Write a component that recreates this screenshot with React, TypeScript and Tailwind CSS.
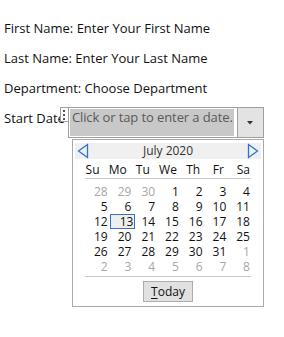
const font = { fontFamily: '"Open Sans", "Noto Sans", sans-serif' };

type Day = { n: number; muted?: boolean; today?: boolean };

const weeks: Day[][] = [
  [{ n: 28, muted: true }, { n: 29, muted: true }, { n: 30, muted: true }, { n: 1 }, { n: 2 }, { n: 3 }, { n: 4 }],
  [{ n: 5 }, { n: 6 }, { n: 7 }, { n: 8 }, { n: 9 }, { n: 10 }, { n: 11 }],
  [{ n: 12 }, { n: 13, today: true }, { n: 14 }, { n: 15 }, { n: 16 }, { n: 17 }, { n: 18 }],
  [{ n: 19 }, { n: 20 }, { n: 21 }, { n: 22 }, { n: 23 }, { n: 24 }, { n: 25 }],
  [{ n: 26 }, { n: 27 }, { n: 28 }, { n: 29 }, { n: 30 }, { n: 31 }, { n: 1, muted: true }],
  [{ n: 2, muted: true }, { n: 3, muted: true }, { n: 4, muted: true }, { n: 5, muted: true }, { n: 6, muted: true }, { n: 7, muted: true }, { n: 8, muted: true }],
];

const dayNames = ["Su", "Mo", "Tu", "We", "Th", "Fr", "Sa"];

function Arrow({ dir }: { dir: "left" | "right" }) {
  return (
    <svg width="12" height="16" viewBox="0 0 12 16" className="shrink-0">
      {dir === "left" ? (
        <path d="M10.5 1.5 L1.5 8 L10.5 14.5 Z" fill="none" stroke="#2f74c9" strokeWidth="1.3" />
      ) : (
        <path d="M1.5 1.5 L10.5 8 L1.5 14.5 Z" fill="none" stroke="#2f74c9" strokeWidth="1.3" />
      )}
    </svg>
  );
}

function DatePopup() {
  return (
    <div className="absolute left-[68px] top-[31px] w-[192px] border border-[#a9a9a9] bg-white pb-[4px]">
      <div className="mx-[2px] mt-[3px] flex h-[16px] items-center justify-between bg-[#f0f0f0] px-[2px]">
        <Arrow dir="left" />
        <span className="text-[12px] text-[#333]">July 2020</span>
        <Arrow dir="right" />
      </div>
      <div className="mx-[7px] mt-[3px] grid h-[15px] grid-cols-7 items-center text-[12px] text-[#111]">
        {dayNames.map((d) => (
          <span key={d} className="text-center leading-[15px]">
            {d}
          </span>
        ))}
      </div>
      <div className="mx-[12px] mt-[1px] h-px bg-[#c8c8c8]" />
      <div className="mx-[12px] mt-[5px] flex flex-col">
        {weeks.map((w, i) => (
          <div key={i} className="grid h-[15px] grid-cols-7 text-[12px] leading-[15px]">
            {w.map((d, j) => (
              <span
                key={j}
                className={
                  d.today
                    ? "-mr-[3px] ml-[1px] border border-[#3c73c0] bg-[#eeeeee] pr-[1px] text-right leading-[13px] text-[#111]"
                    : d.muted
                      ? "pr-[1px] text-right text-[#a6a6a6]"
                      : "pr-[1px] text-right text-[#111]"
                }
              >
                {d.n}
              </span>
            ))}
          </div>
        ))}
      </div>
      <div className="mx-[12px] mt-[2px] h-px bg-[#c8c8c8]" />
      <div className="mt-[4px] flex justify-center">
        <button className="h-[21px] w-[50px] border border-[#adadad] bg-[#e1e1e1] text-[12px] leading-[19px] text-[#111]">
          <span className="underline underline-offset-2">T</span>oday
        </button>
      </div>
    </div>
  );
}

export default function App() {
  return (
    <div className="h-[337px] w-[284px] bg-white pl-[4px] pt-[18px] text-[13px] text-[#111]" style={font}>
      <div className="flex flex-col gap-[10px] leading-[20px]">
        <p>First Name: Enter Your First Name</p>
        <p>Last Name: Enter Your Last Name</p>
        <p>Department: Choose Department</p>
        <div className="relative flex items-start">
          <span>Start Date</span>
          <div className="-ml-[5px] mt-[-1px] flex items-start">
            <div className="flex h-[15px] w-[9px] flex-col items-center justify-center gap-[2px] border border-[#a0a0a0] bg-white">
              <span className="h-[2px] w-[2px] bg-[#555]" />
              <span className="h-[2px] w-[2px] bg-[#555]" />
              <span className="h-[2px] w-[2px] bg-[#555]" />
            </div>
            <div className="-ml-px flex h-[31px] w-[196px] border border-[#a0a0a0] bg-white">
              <div className="m-px w-[164px] overflow-hidden whitespace-nowrap bg-[#c8c8c8] pl-[2px] text-[13px] leading-[17px] tracking-[-0.1px] text-[#595959]">
                Click or tap to enter a date.
              </div>
              <div className="ml-auto flex w-[26px] items-center justify-center border-l border-[#a0a0a0] bg-[#e3e3e3]">
                <svg width="6" height="4" viewBox="0 0 6 4">
                  <path d="M0 0 H6 L3 3.5 Z" fill="#333" />
                </svg>
              </div>
            </div>
          </div>
          <DatePopup />
        </div>
      </div>
    </div>
  );
}
